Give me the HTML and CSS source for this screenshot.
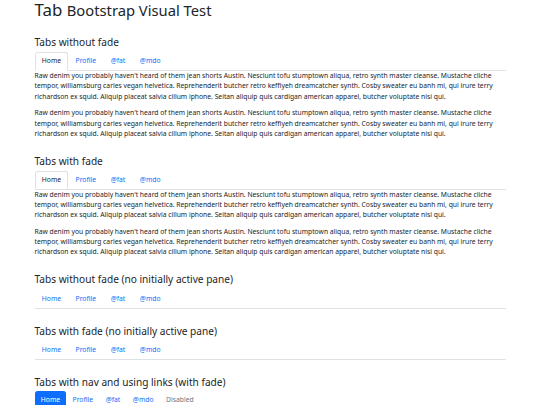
FILE: index.html
```html
<!DOCTYPE html>
<html>
<head>
    <meta charset="UTF-8">
    <meta name="viewport" content="width=device-width, initial-scale=1.0">
    <title>Tab</title>
    <link rel="stylesheet" href="styles.css">
</head>
<body>
    <div class="container">
        <h1>Tab <small>Bootstrap Visual Test</small></h1>

        <h4>Tabs without fade</h4>
        <ul class="nav nav-tabs">
            <li><button class="nav-link active">Home</button></li>
            <li><button class="nav-link">Profile</button></li>
            <li><button class="nav-link">@fat</button></li>
            <li><button class="nav-link">@mdo</button></li>
        </ul>
        <div class="tab-content">
            <p>Raw denim you probably haven't heard of them jean shorts Austin. Nesciunt tofu stumptown aliqua, retro synth master cleanse. Mustache cliche tempor, williamsburg carles vegan helvetica. Reprehenderit butcher retro keffiyeh dreamcatcher synth. Cosby sweater eu banh mi, qui irure terry richardson ex squid. Aliquip placeat salvia cillum iphone. Seitan aliquip quis cardigan american apparel, butcher voluptate nisi qui.</p>
            <p>Raw denim you probably haven't heard of them jean shorts Austin. Nesciunt tofu stumptown aliqua, retro synth master cleanse. Mustache cliche tempor, williamsburg carles vegan helvetica. Reprehenderit butcher retro keffiyeh dreamcatcher synth. Cosby sweater eu banh mi, qui irure terry richardson ex squid. Aliquip placeat salvia cillum iphone. Seitan aliquip quis cardigan american apparel, butcher voluptate nisi qui.</p>
        </div>

        <h4>Tabs with fade</h4>
        <ul class="nav nav-tabs">
            <li><button class="nav-link active">Home</button></li>
            <li><button class="nav-link">Profile</button></li>
            <li><button class="nav-link">@fat</button></li>
            <li><button class="nav-link">@mdo</button></li>
        </ul>
        <div class="tab-content">
            <p>Raw denim you probably haven't heard of them jean shorts Austin. Nesciunt tofu stumptown aliqua, retro synth master cleanse. Mustache cliche tempor, williamsburg carles vegan helvetica. Reprehenderit butcher retro keffiyeh dreamcatcher synth. Cosby sweater eu banh mi, qui irure terry richardson ex squid. Aliquip placeat salvia cillum iphone. Seitan aliquip quis cardigan american apparel, butcher voluptate nisi qui.</p>
            <p>Raw denim you probably haven't heard of them jean shorts Austin. Nesciunt tofu stumptown aliqua, retro synth master cleanse. Mustache cliche tempor, williamsburg carles vegan helvetica. Reprehenderit butcher retro keffiyeh dreamcatcher synth. Cosby sweater eu banh mi, qui irure terry richardson ex squid. Aliquip placeat salvia cillum iphone. Seitan aliquip quis cardigan american apparel, butcher voluptate nisi qui.</p>
        </div>

        <h4>Tabs without fade (no initially active pane)</h4>
        <ul class="nav nav-tabs">
            <li><button class="nav-link">Home</button></li>
            <li><button class="nav-link">Profile</button></li>
            <li><button class="nav-link">@fat</button></li>
            <li><button class="nav-link">@mdo</button></li>
        </ul>

        <h4>Tabs with fade (no initially active pane)</h4>
        <ul class="nav nav-tabs">
            <li><button class="nav-link">Home</button></li>
            <li><button class="nav-link">Profile</button></li>
            <li><button class="nav-link">@fat</button></li>
            <li><button class="nav-link">@mdo</button></li>
        </ul>

        <h4>Tabs with nav and using links (with fade)</h4>
        <nav class="nav nav-pills">
            <a href="#" class="nav-link active">Home</a>
            <a href="#" class="nav-link">Profile</a>
            <a href="#" class="nav-link">@fat</a>
            <a href="#" class="nav-link">@mdo</a>
            <a href="#" class="nav-link disabled">Disabled</a>
        </nav>
    </div>
</body>
</html>
```

FILE: styles.css
```css
/* sizes are the usual bootstrap ones shrunk to a 540px wide window */
body {
    margin: 0;
    font-family: "Noto Sans", "Liberation Sans", sans-serif;
    font-size: 6.75px;
    line-height: 1.5;
    color: #212529;
    background-color: #fff;
}

.container {
    width: 471px;
    margin: 0 auto;
}

h1, h4 {
    font-weight: 400;
    line-height: 1.2;
}

h1 {
    margin: 0 0 3.4px;
    font-size: 16.875px;
}

h1 small {
    font-size: 0.875em;
}

h4 {
    margin: 16px 0 3.6px;
    font-size: 10.125px;
}

p {
    margin: 0 0 6.75px;
}

.nav {
    display: flex;
    flex-wrap: wrap;
    margin: 0;
    padding: 0;
    list-style: none;
}

.nav-link {
    display: block;
    padding: 3.375px 6.3px;
    font: inherit;
    color: #0d6efd;
    text-decoration: none;
    background: none;
    border: 0;
    cursor: pointer;
}

.nav-tabs {
    border-bottom: 0.5px solid #dee2e6;
}

.nav-tabs .nav-link {
    margin-bottom: -0.5px;
    border: 0.5px solid transparent;
    border-top-left-radius: 2.5px;
    border-top-right-radius: 2.5px;
}

.nav-tabs .nav-link.active {
    color: #212529;
    background-color: #fff;
    border-color: #dee2e6 #dee2e6 #fff;
}

.nav-pills .nav-link {
    border-radius: 2.5px;
}

.nav-pills .nav-link.active {
    color: #fff;
    background-color: #0d6efd;
}

.nav-link.disabled {
    color: #6c757d;
    cursor: default;
}
```
